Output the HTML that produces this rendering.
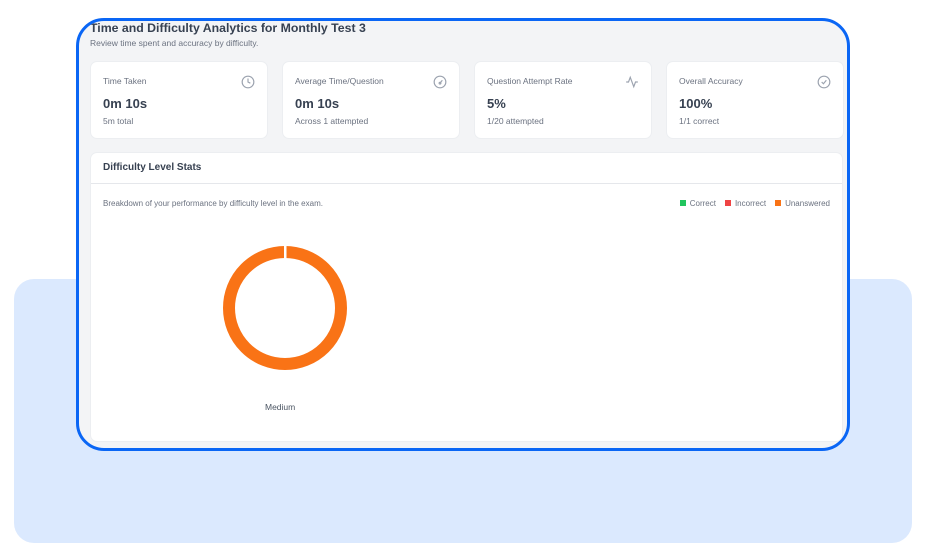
<!DOCTYPE html>
<html><head><style>
*{margin:0;padding:0;box-sizing:border-box}
body{width:926px;height:559px;background:#fff;position:relative;overflow:hidden;font-family:"Liberation Sans",Arial,sans-serif;color:#1f2937}
.bg{position:absolute;left:14px;top:279px;width:898px;height:264px;background:#dbe9fe;border-radius:20px}
.frame{position:absolute;left:76px;top:18px;width:774px;height:433px;border:3px solid #0a66f5;border-radius:28px;background:#f3f4f6;overflow:hidden}
.t{position:absolute;left:11px;top:0px;font-size:12.3px;font-weight:bold;color:#374151}
.st{position:absolute;left:11px;top:17px;font-size:8.5px;color:#6b7280}
.card{position:absolute;top:40px;width:178px;height:78px;background:#fff;border-radius:7px;border:1px solid #eceef1}
.card .l{position:absolute;left:12px;top:14px;font-size:8.5px;color:#6b7280}
.card .v{position:absolute;left:12px;top:34px;font-size:13px;font-weight:bold;color:#374151}
.card .s{position:absolute;left:12px;top:54px;font-size:8.5px;color:#6b7280}
.card svg{position:absolute;right:12px;top:13px}
.panel{position:absolute;left:11px;top:131px;width:753px;height:290px;background:#fff;border-radius:7px;border:1px solid #eceef1}
.ph{height:31px;border-bottom:1px solid #e5e7eb;font-size:10px;font-weight:bold;color:#374151;padding:9px 0 0 12px}
.desc{position:absolute;left:12px;top:46px;font-size:8px;color:#6b7280}
.leg{position:absolute;right:12px;top:46px;font-size:8px;color:#6b7280}
.leg i{display:inline-block;width:6px;height:6px;margin:0 4px 0 9px;vertical-align:0}
.med{position:absolute;left:174px;top:249px;font-size:8.5px;color:#4b5563}
</style></head><body>
<div class="bg"></div>
<div class="frame">
<div class="t">Time and Difficulty Analytics for Monthly Test 3</div>
<div class="st">Review time spent and accuracy by difficulty.</div>
<div class="card" style="left:11px"><div class="l">Time Taken</div><div class="v">0m 10s</div><div class="s">5m total</div>
<svg width="14" height="14" viewBox="0 0 24 24" fill="none" stroke="#9ca3af" stroke-width="2"><circle cx="12" cy="12" r="10"/><path d="M12 6v6l4 2"/></svg></div>
<div class="card" style="left:203px"><div class="l">Average Time/Question</div><div class="v">0m 10s</div><div class="s">Across 1 attempted</div>
<svg width="14" height="14" viewBox="0 0 24 24" fill="none" stroke="#9ca3af" stroke-width="2"><circle cx="12" cy="12" r="10"/><path d="M12 14l4-5"/><circle cx="12" cy="14" r="1.5"/></svg></div>
<div class="card" style="left:395px"><div class="l">Question Attempt Rate</div><div class="v">5%</div><div class="s">1/20 attempted</div>
<svg width="14" height="14" viewBox="0 0 24 24" fill="none" stroke="#9ca3af" stroke-width="2"><path d="M2 12h4l3-8 6 16 3-8h4"/></svg></div>
<div class="card" style="left:587px"><div class="l">Overall Accuracy</div><div class="v">100%</div><div class="s">1/1 correct</div>
<svg width="14" height="14" viewBox="0 0 24 24" fill="none" stroke="#9ca3af" stroke-width="2"><circle cx="12" cy="12" r="10"/><path d="M8 12l3 3 5-6"/></svg></div>
<div class="panel">
<div class="ph">Difficulty Level Stats</div>
<div class="desc">Breakdown of your performance by difficulty level in the exam.</div>
<div class="leg"><i style="background:#22c55e"></i>Correct<i style="background:#ef4444"></i>Incorrect<i style="background:#f97316"></i>Unanswered</div>
<svg style="position:absolute;left:129px;top:90px" width="130" height="130" viewBox="0 0 130 130"><circle cx="65" cy="65" r="56" fill="none" stroke="#f97316" stroke-width="12"/><rect x="64" y="2" width="2.5" height="14" fill="#fff"/></svg>
<div class="med">Medium</div>
</div>
</div>
</body></html>
